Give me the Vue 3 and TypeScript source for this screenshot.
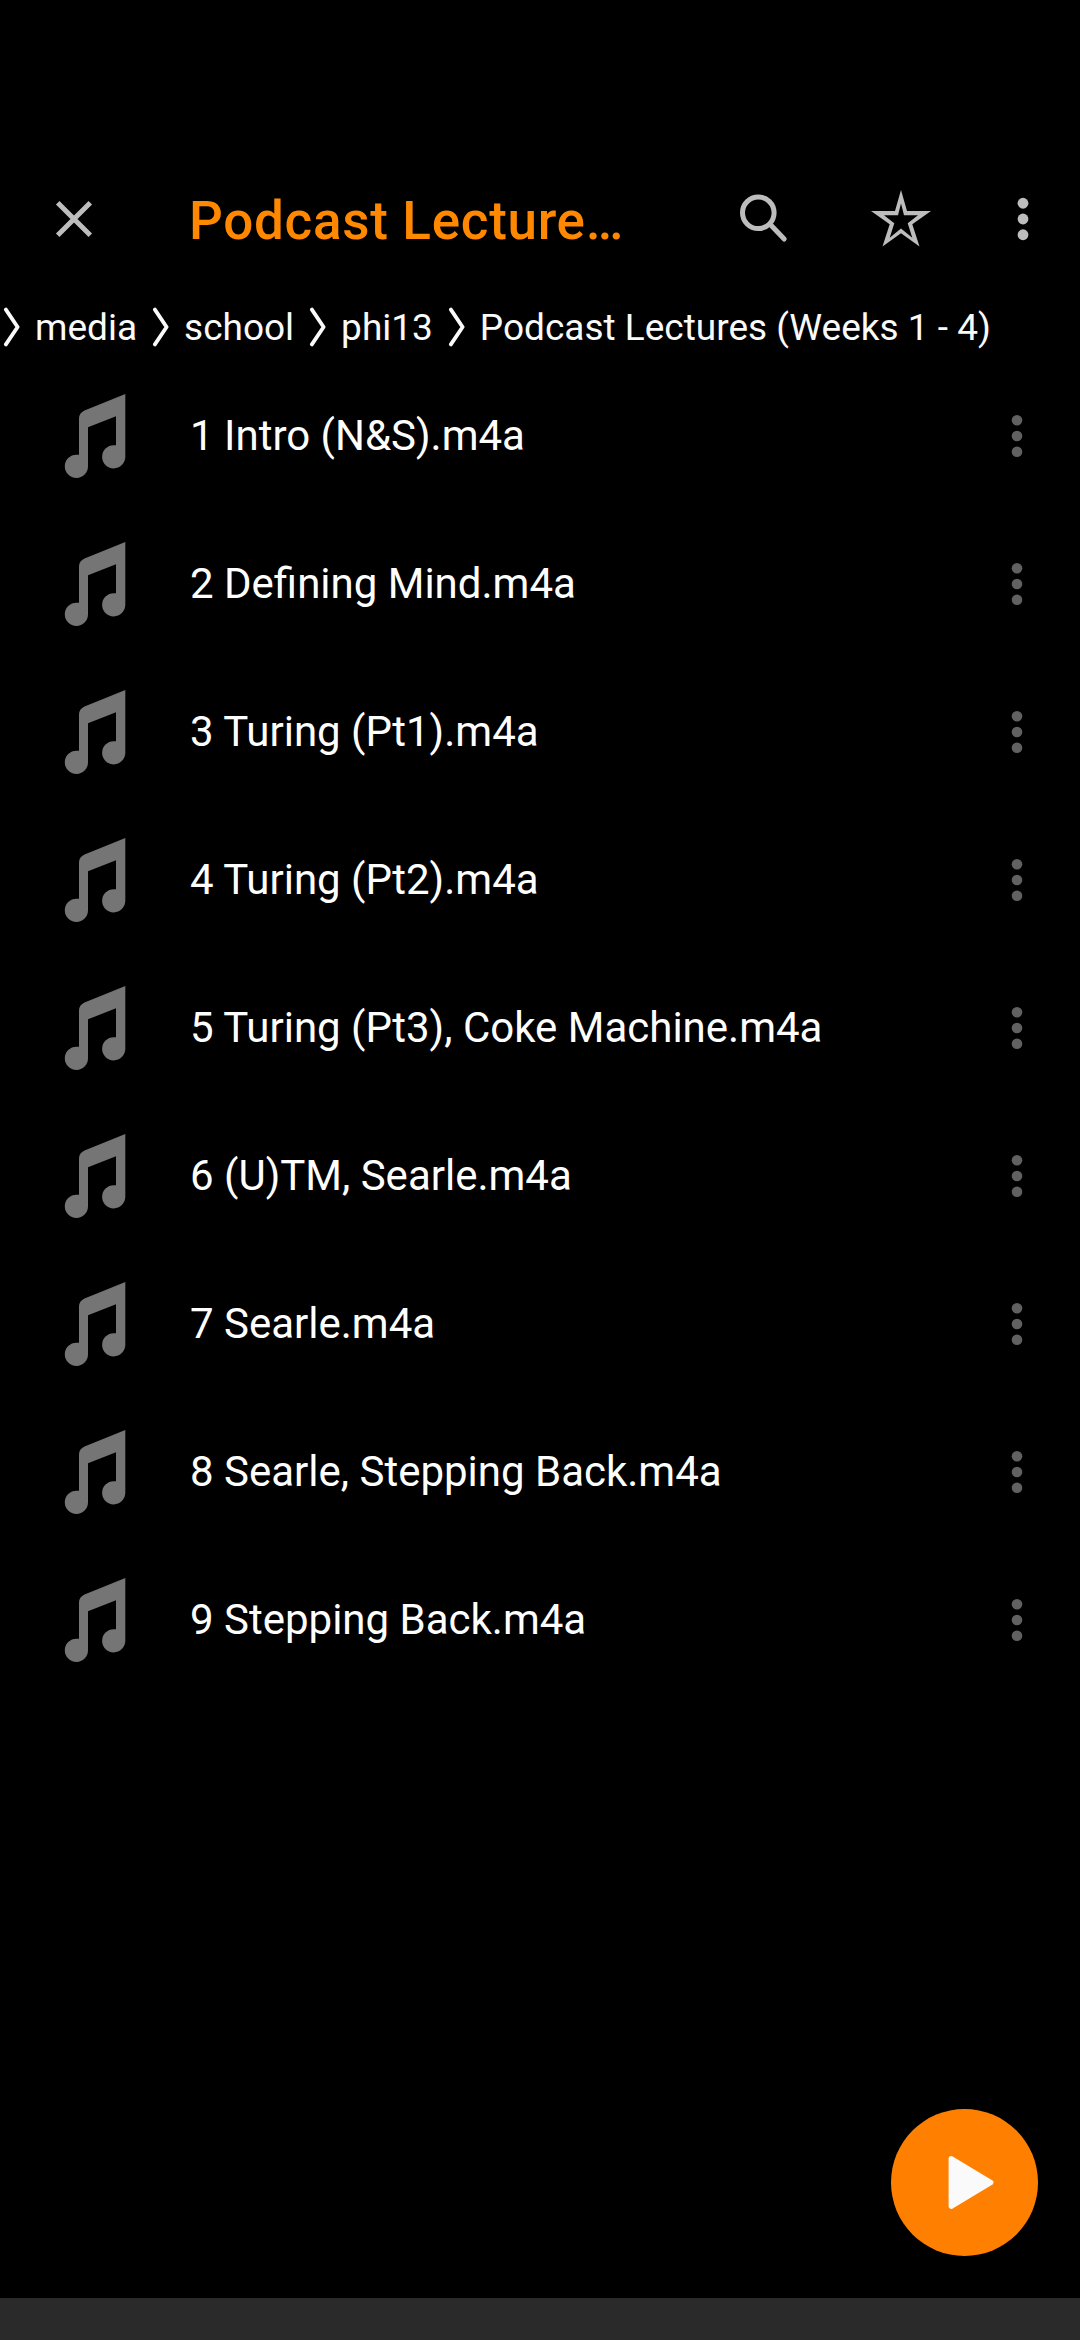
<script setup lang="ts">
const crumbs: string[] = ['media', 'school', 'phi13', 'Podcast Lectures (Weeks 1 - 4)']

const files: string[] = [
  '1 Intro (N&S).m4a',
  '2 Defining Mind.m4a',
  '3 Turing (Pt1).m4a',
  '4 Turing (Pt2).m4a',
  '5 Turing (Pt3), Coke Machine.m4a',
  '6 (U)TM, Searle.m4a',
  '7 Searle.m4a',
  '8 Searle, Stepping Back.m4a',
  '9 Stepping Back.m4a',
]
</script>

<template>
  <div class="screen">
    <header class="toolbar">
      <button class="close" aria-label="Close">
        <svg width="40" height="40" viewBox="0 0 40 40">
          <path d="M3.7 3.7 36.3 36.3M36.3 3.7 3.7 36.3" fill="none" stroke="#bdbdbd" stroke-width="5" />
        </svg>
      </button>
      <h1 class="title">Podcast Lecture…</h1>
      <div class="actions">
        <button class="search" aria-label="Search">
          <svg width="50" height="50" viewBox="0 0 50 50">
            <circle cx="19.3" cy="18.8" r="15.8" fill="none" stroke="#bdbdbd" stroke-width="5" />
            <path d="M32.5 31.8 45.2 45" stroke="#bdbdbd" stroke-width="5" stroke-linecap="round" />
          </svg>
        </button>
        <button class="star" aria-label="Favorite">
          <svg width="62" height="60" viewBox="0 0 62 60">
            <path
              fill="#bdbdbd"
              fill-rule="evenodd"
              d="M31 1 37 22H61L42.3 35.2 49.5 57.6 31 44.3 12.5 57.6 19.7 35.2 1 22H25ZM31 14.5 28 26.3H14L24.3 34.2 19.7 48.7 31 39.4 42.3 48.7 37.7 34.2 48 26.3H34Z"
            />
          </svg>
        </button>
        <button class="overflow" aria-label="More options">
          <svg width="12" height="44" viewBox="0 0 12 44" fill="#bdbdbd">
            <circle cx="6" cy="6.25" r="5.4" />
            <circle cx="6" cy="22" r="5.4" />
            <circle cx="6" cy="37.75" r="5.4" />
          </svg>
        </button>
      </div>
    </header>

    <nav class="crumbs">
      <template v-for="crumb in crumbs" :key="crumb">
        <svg class="chevron" width="18" height="40" viewBox="0 0 18 40">
          <path d="M2.9 2.6 14.6 20 2.9 37.4" fill="none" stroke="#fafafa" stroke-width="3.8" stroke-linecap="round" stroke-linejoin="round" />
        </svg>
        <span class="crumb">{{ crumb }}</span>
      </template>
    </nav>

    <ul class="files">
      <li v-for="file in files" :key="file" class="file">
        <svg class="note" width="62" height="86" viewBox="0 0 62 86">
          <path
            fill="#757575"
            d="M61.3 1V64A11.6 11.6 0 1 1 49.7 52.2H52V23.3L24 34.3V73.3A11.6 11.6 0 1 1 12.4 61.7H15V25.5Q15 20 20.5 17.5Z"
          />
        </svg>
        <span class="name">{{ file }}</span>
        <svg class="more" width="12" height="44" viewBox="0 0 12 44" fill="#616161">
          <circle cx="6" cy="6.25" r="5.3" />
          <circle cx="6" cy="22" r="5.3" />
          <circle cx="6" cy="37.75" r="5.3" />
        </svg>
      </li>
    </ul>

    <button class="fab" aria-label="Play">
      <svg width="147" height="147" viewBox="0 0 147 147">
        <path d="M60.3 49.8 99.7 73.5 60.3 97.2Z" fill="#fafafa" stroke="#fafafa" stroke-width="5.4" stroke-linejoin="round" />
      </svg>
    </button>
    <footer class="navbar"></footer>
  </div>
</template>

<style>
body {
  background: #000;
}
</style>

<style scoped>
.screen {
  position: relative;
  display: flex;
  flex-direction: column;
  box-sizing: border-box;
  width: 1080px;
  height: 2340px;
  padding-top: 145px;
  overflow: hidden;
  background: #000;
  color: #fff;
  font-family: Roboto, "Noto Sans", sans-serif;
}
svg {
  display: block;
  flex: none;
}
button {
  padding: 0;
  border: 0;
  background: none;
}
.toolbar {
  display: flex;
  align-items: center;
  height: 147px;
  padding: 0 51px 0 53.5px;
}
.title {
  margin: 4px 0 0 95.5px;
  font-size: 53px;
  line-height: 62px;
  font-weight: 500;
  letter-spacing: 0.7px;
  color: #ff8800;
  white-space: nowrap;
}
.actions {
  display: flex;
  align-items: center;
  margin-left: auto;
}
.search {
  margin-right: 81px;
}
.star {
  margin-right: 85.5px;
}
.crumbs {
  display: flex;
  align-items: center;
  height: 70px;
  padding-left: 3px;
  color: #fafafa;
  font-size: 37px;
  line-height: 44px;
  white-space: nowrap;
}
.crumb {
  margin: 0 15px 0 14px;
  padding-top: 2px;
}
.files {
  margin: 0;
  padding: 0;
  list-style: none;
}
.file {
  display: flex;
  align-items: center;
  height: 148px;
  padding: 0 57px 0 64px;
}
.name {
  flex: 1;
  margin-left: 64px;
  font-size: 42px;
  line-height: 50px;
  white-space: nowrap;
}
.fab {
  position: absolute;
  right: 42px;
  bottom: 84px;
  width: 147px;
  height: 147px;
  border-radius: 50%;
  background: #ff8000;
}
.navbar {
  height: 42px;
  margin-top: auto;
  background: #2a2a2a;
}
</style>
